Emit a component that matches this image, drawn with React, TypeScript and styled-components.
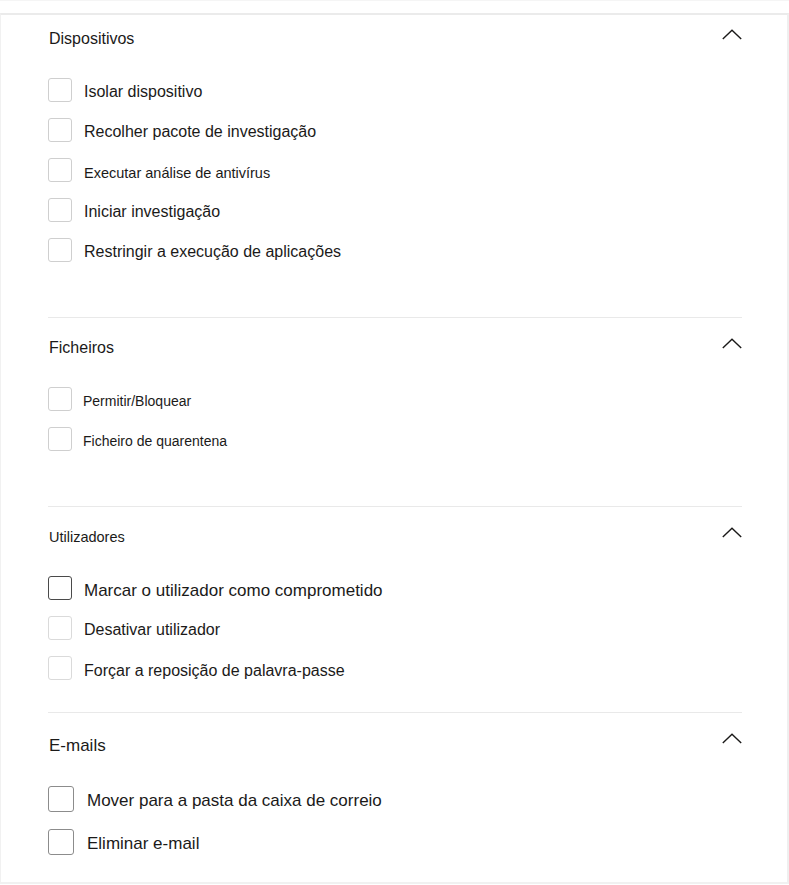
import React from "react";
import styled, { createGlobalStyle } from "styled-components";

const Global = createGlobalStyle`
  html, body { margin: 0; padding: 0; background: #ffffff; }
  body { font-family: "Liberation Sans", Arial, sans-serif; color: #1b1a19; }
  * { box-sizing: border-box; }
`;

const Page = styled.div`
  width: 789px;
  height: 885px;
  border-top: 1px solid #f5f5f5;
  padding-top: 12px;
  background: #ffffff;
`;

const Panel = styled.div`
  height: 871px;
  border-top: 2px solid #ebebeb;
  border-left: 1px solid #f1f1f1;
  border-right: 2px solid #efefef;
  border-bottom: 2px solid #f1f1f1;
  padding: 3px 45px 0 47px;
`;

const Section = styled.section<{ $top: number; $bottom: number; $last?: boolean }>`
  padding-top: ${(p) => p.$top}px;
  padding-bottom: ${(p) => p.$bottom}px;
  border-bottom: ${(p) => (p.$last ? "none" : "1px solid #e9e9e9")};
`;

const Header = styled.div`
  height: 40px;
  display: flex;
  align-items: center;
  justify-content: space-between;
  padding-left: 1px;
`;

const Title = styled.h3<{ $size: number }>`
  margin: 0;
  padding-top: 2px;
  font-weight: 400;
  font-size: ${(p) => p.$size}px;
  line-height: 1;
  color: #1b1a19;
`;

const Toggle = styled.button<{ $lift: number }>`
  border: none;
  background: transparent;
  padding: 0;
  width: 20px;
  height: 11px;
  display: flex;
  margin-bottom: ${(p) => p.$lift}px;
  cursor: pointer;
`;

const List = styled.ul<{ $top: number }>`
  list-style: none;
  margin: ${(p) => p.$top}px 0 0 0;
  padding: 0;
`;

const Row = styled.li<{ $height: number; $gap: number }>`
  height: ${(p) => p.$height}px;
  display: flex;
  align-items: center;
  gap: ${(p) => p.$gap}px;
`;

const Box = styled.span<{ $box: number; $border: string }>`
  width: ${(p) => p.$box}px;
  height: ${(p) => p.$box}px;
  flex: none;
  border: 1px solid ${(p) => p.$border};
  border-radius: 3px;
  background: #ffffff;
`;

const Label = styled.span<{ $size: number; $drop: number }>`
  padding-top: ${(p) => p.$drop}px;
  font-size: ${(p) => p.$size}px;
  line-height: 1;
  color: #1b1a19;
  white-space: nowrap;
`;

const Chevron = () => (
  <svg width="20" height="11" viewBox="0 0 20 11" fill="none">
    <polyline points="0.8,10 10,1.2 19.2,10" stroke="#1b1a19" strokeWidth="1.4" />
  </svg>
);

type Item = { label: string; size: number; border: string; drop?: number };
type Group = {
  title: string;
  titleSize: number;
  top: number;
  bottom: number;
  listTop: number;
  rowHeight: number;
  box: number;
  gap: number;
  lift: number;
  items: Item[];
};

const LIGHT = "#cfcfcf";

const groups: Group[] = [
  {
    title: "Dispositivos",
    titleSize: 16,
    top: 0,
    bottom: 47,
    listTop: 12,
    rowHeight: 40,
    box: 24,
    gap: 12,
    lift: 8,
    items: [
      { label: "Isolar dispositivo", size: 16, border: LIGHT },
      { label: "Recolher pacote de investigação", size: 16, border: LIGHT },
      { label: "Executar análise de antivírus", size: 14.5, border: LIGHT, drop: 6 },
      { label: "Iniciar investigação", size: 16, border: LIGHT },
      { label: "Restringir a execução de aplicações", size: 16, border: LIGHT },
    ],
  },
  {
    title: "Ficheiros",
    titleSize: 16,
    top: 9,
    bottom: 47,
    listTop: 12,
    rowHeight: 40,
    box: 24,
    gap: 11,
    lift: 8,
    items: [
      { label: "Permitir/Bloquear", size: 14, border: LIGHT },
      { label: "Ficheiro de quarentena", size: 14, border: LIGHT },
    ],
  },
  {
    title: "Utilizadores",
    titleSize: 14.5,
    top: 9,
    bottom: 24,
    listTop: 12,
    rowHeight: 40,
    box: 24,
    gap: 12,
    lift: 8,
    items: [
      { label: "Marcar o utilizador como comprometido", size: 17, border: "#4a4a4a" },
      { label: "Desativar utilizador", size: 16, border: "#dadada" },
      { label: "Forçar a reposição de palavra-passe", size: 16, border: "#dadada", drop: 6 },
    ],
  },
  {
    title: "E-mails",
    titleSize: 17,
    top: 11,
    bottom: 0,
    listTop: 13,
    rowHeight: 43,
    box: 26,
    gap: 13,
    lift: 12,
    items: [
      { label: "Mover para a pasta da caixa de correio", size: 17, border: "#8c8c8c" },
      { label: "Eliminar e-mail", size: 17, border: "#8c8c8c" },
    ],
  },
];

export default function App() {
  return (
    <>
      <Global />
      <Page>
        <Panel>
          {groups.map((g, i) => (
            <Section key={g.title} $top={g.top} $bottom={g.bottom} $last={i === groups.length - 1}>
              <Header>
                <Title $size={g.titleSize}>{g.title}</Title>
                <Toggle $lift={g.lift} aria-label="Fechar">
                  <Chevron />
                </Toggle>
              </Header>
              <List $top={g.listTop}>
                {g.items.map((it) => (
                  <Row key={it.label} $height={g.rowHeight} $gap={g.gap}>
                    <Box $box={g.box} $border={it.border} />
                    <Label $size={it.size} $drop={it.drop ?? 4}>
                      {it.label}
                    </Label>
                  </Row>
                ))}
              </List>
            </Section>
          ))}
        </Panel>
      </Page>
    </>
  );
}
